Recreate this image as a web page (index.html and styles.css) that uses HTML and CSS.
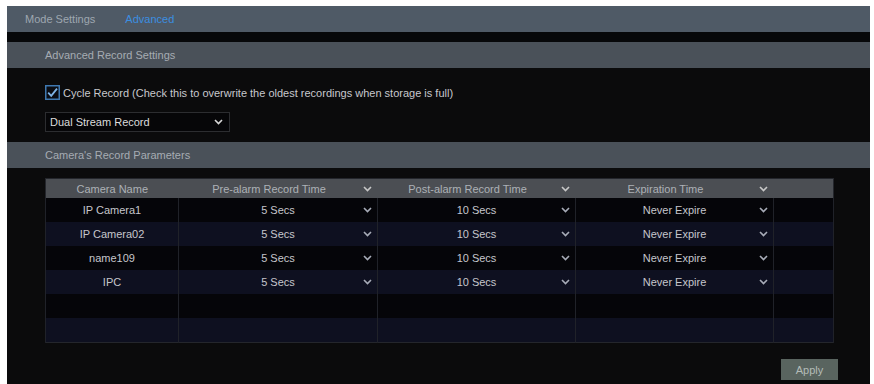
FILE: index.html
```html
<!DOCTYPE html>
<html>
<head>
  <meta charset="UTF-8">
  <link rel="stylesheet" href="styles.css">
</head>
<body>
  <div class="frame">
    <div class="tab-bar">
      <span class="tab">Mode Settings</span>
      <span class="tab active">Advanced</span>
    </div>
    <div class="strip"></div>
    <div class="section-title">Advanced Record Settings</div>
    <div class="section-body">
      <label class="check-row">
        <svg class="checkbox" width="15" height="15" viewBox="0 0 15 15">
          <rect x="0.75" y="0.75" width="13.5" height="13.5" fill="#0a0c12" stroke="#3f78b0" stroke-width="1.5"/>
          <path d="M3.2 7.6 L6.2 10.8 L12 3.6" fill="none" stroke="#7fb4e6" stroke-width="1.8"/>
        </svg>
        <span>Cycle Record (Check this to overwrite the oldest recordings when storage is full)</span>
      </label>
      <div class="select">
        <span>Dual Stream Record</span>
        <svg class="chev" width="9" height="6" viewBox="0 0 9 6"><path d="M1 1 L4.5 4.5 L8 1" fill="none" stroke="#d8d8d8" stroke-width="1.6"/></svg>
      </div>
    </div>
    <div class="section-title">Camera's Record Parameters</div>
    <div class="table-wrap">
      <table class="params">
        <colgroup>
          <col style="width:133px"><col style="width:199px"><col style="width:198px"><col style="width:198px"><col style="width:60px">
        </colgroup>
        <thead>
          <tr>
            <th><div class="cell plain">Camera Name</div></th>
            <th><div class="cell head"><span></span><span>Pre-alarm Record Time</span><svg class="chev" width="9" height="6" viewBox="0 0 9 6"><path d="M1 1 L4.5 4.5 L8 1" fill="none" stroke="#c8c8c8" stroke-width="1.6"/></svg></div></th>
            <th><div class="cell head"><span></span><span>Post-alarm Record Time</span><svg class="chev" width="9" height="6" viewBox="0 0 9 6"><path d="M1 1 L4.5 4.5 L8 1" fill="none" stroke="#c8c8c8" stroke-width="1.6"/></svg></div></th>
            <th><div class="cell head"><span></span><span>Expiration Time</span><svg class="chev" width="9" height="6" viewBox="0 0 9 6"><path d="M1 1 L4.5 4.5 L8 1" fill="none" stroke="#c8c8c8" stroke-width="1.6"/></svg></div></th>
            <th></th>
          </tr>
        </thead>
        <tbody id="rows"></tbody>
      </table>
    </div>
    <div class="actions">
      <button class="apply">Apply</button>
    </div>
  </div>
  <script src="app.js"></script>
</body>
</html>
```

FILE: app.js
```js
var cams = ['IP Camera1', 'IP Camera02', 'name109', 'IPC'];
var chev = '<svg class="chev" width="9" height="6" viewBox="0 0 9 6"><path d="M1 1 L4.5 4.5 L8 1" fill="none" stroke="#a8acb8" stroke-width="1.6"/></svg>';
var body = document.getElementById('rows');
var html = '';
for (var i = 0; i < 6; i++) {
  var c = cams[i];
  if (c) {
    html += '<tr><td><div class="cell plain">' + c + '</div></td>' +
      '<td><div class="cell"><span></span><span>5 Secs</span>' + chev + '</div></td>' +
      '<td><div class="cell"><span></span><span>10 Secs</span>' + chev + '</div></td>' +
      '<td><div class="cell"><span></span><span>Never Expire</span>' + chev + '</div></td>' +
      '<td></td></tr>';
  } else {
    html += '<tr><td></td><td></td><td></td><td></td><td></td></tr>';
  }
}
body.innerHTML = html;
```

FILE: styles.css
```css
body { margin: 0; background: #fff; font-family: "Liberation Sans", Arial, sans-serif; font-size: 11px; }
.frame { margin: 6px 4px 0 7px; height: 378px; background: #0b0b0c; display: flex; flex-direction: column; overflow: hidden; }
.tab-bar { height: 26px; background: #4f5a66; display: flex; align-items: center; padding-left: 18px; gap: 30px; }
.tab { color: #9ea7b0; }
.tab.active { color: #3b8ee0; }
.strip { height: 10px; background: #07080a; }
.section-title { height: 26px; background: #4a5159; color: #a6acb3; display: flex; align-items: center; padding-left: 38px; }
.section-body { padding: 17px 0 10px 38px; }
.check-row { display: flex; align-items: center; gap: 3px; color: #c8c8cc; height: 15px; }
.checkbox { display: block; }
.select { margin-top: 12px; width: 185px; height: 20px; border: 1px solid #2c2d30; box-sizing: border-box; background: #060608; color: #dcdcdc; display: flex; align-items: center; justify-content: space-between; padding: 0 6px 0 4px; }
.chev { display: block; }
.table-wrap { padding: 10px 0 0 38px; }
.params { border-collapse: collapse; table-layout: fixed; width: 788px; border: 1px solid #24262c; }
.params th { height: 19px; padding: 0; background: #4b4e53; color: #adb1b6; font-weight: normal; }
.params td { height: 24px; padding: 0; color: #c6c6cc; border-left: 1px solid #202229; border-right: 1px solid #202229; }
.params tbody tr:nth-child(odd) td { background: #050509; }
.params tbody tr:nth-child(even) td { background: #0e1020; }
.cell { display: grid; grid-template-columns: 20px 1fr 20px; align-items: center; justify-items: center; }
.cell.head { grid-template-columns: 2px 1fr 20px; }
.cell.plain { display: block; text-align: center; }
.actions { display: flex; justify-content: flex-end; padding: 16px 32px 0 0; }
.apply { width: 57px; height: 21px; border: none; background: #59645f; color: #b4bcb8; font-family: inherit; font-size: 11px; padding: 0; }
```
